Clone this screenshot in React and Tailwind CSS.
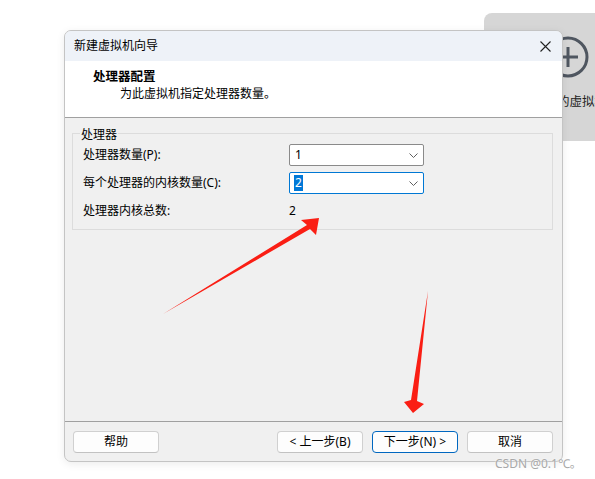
import React from 'react';

const font = { fontFamily: '"Noto Sans", "Noto Sans CJK SC", sans-serif' };

const Chevron = () => (
  <svg width="9" height="5" viewBox="0 0 9 5" className="shrink-0">
    <path d="M0.5 0.5 L4.5 4.5 L8.5 0.5" fill="none" stroke="#606060" strokeWidth="1" />
  </svg>
);

const Combo = ({ value, focused }) => (
  <div
    className={
      'h-[22px] w-[135px] bg-white rounded-[2px] border flex items-center justify-between pl-[4px] pr-[5px] ' +
      (focused ? 'border-[#0078d4]' : 'border-[#8a8a8a]')
    }
  >
    {focused ? (
      <span className="bg-[#0078d7] text-white text-[12px] leading-[16px] px-[1px]">{value}</span>
    ) : (
      <span className="text-[12px] leading-[16px] text-black pl-[1px]">{value}</span>
    )}
    <Chevron />
  </div>
);

const Button = ({ children, primary }) => (
  <button
    className={
      'w-[86px] h-[22px] rounded-[4px] bg-[#fdfdfd] border text-[12px] leading-[16px] text-black flex items-center justify-center ' +
      (primary ? 'border-[#0067c0]' : 'border-[#d0d0d0] border-b-[#c2c2c2]')
    }
  >
    {children}
  </button>
);

export default function App() {
  return (
    <div className="relative w-[595px] h-[479px] bg-white overflow-hidden" style={font}>
      {/* window behind the wizard */}
      <div className="absolute left-[484px] top-[13px] w-[130px] h-[128px] bg-[#d6d6d6] rounded-[8px]">
        <svg className="absolute left-[63px] top-[23px]" width="42" height="42" viewBox="0 0 42 42">
          <circle cx="21" cy="21" r="19" fill="none" stroke="#4f5660" strokeWidth="3" />
          <path d="M21 11 V31 M11 21 H31" stroke="#4f5660" strokeWidth="3" />
        </svg>
        <span className="absolute left-[73px] top-[81px] text-[12.5px] leading-[16px] text-[#222] whitespace-nowrap">
          的虚拟机
        </span>
      </div>

      {/* wizard dialog */}
      <div className="relative z-10 ml-[64px] mt-[30px] w-[499px] h-[432px] border border-[#c4c4c4] rounded-[7px] overflow-hidden flex flex-col bg-[#f0f0f0] shadow-[0_2px_8px_rgba(0,0,0,0.08)]">
        <div className="h-[30px] bg-[#eef2f8] flex items-center justify-between pl-[9px] pr-[11px]">
          <span className="text-[12px] leading-[16px] text-black">新建虚拟机向导</span>
          <svg width="11" height="11" viewBox="0 0 11 11">
            <path d="M0.5 0.5 L10.5 10.5 M10.5 0.5 L0.5 10.5" stroke="#222" strokeWidth="1.1" />
          </svg>
        </div>

        <div className="h-[57px] bg-white border-b border-[#a0a0a0] pt-[8px] pl-[28px]">
          <div className="text-[12.5px] leading-[16px] font-bold text-black">处理器配置</div>
          <div className="mt-[1px] pl-[27px] text-[12px] leading-[16px] text-black">为此虚拟机指定处理器数量。</div>
        </div>

        <div className="flex-1 pt-[15px] pl-[7px] pr-[9px]">
          <div className="relative border border-[#dcdcdc] h-[97px] pt-[10px] pl-[10px]">
            <span className="absolute left-[7px] -top-[7px] bg-[#f0f0f0] px-[1px] text-[12px] leading-[16px] text-black">
              处理器
            </span>
            <div className="grid grid-cols-[206px_135px] gap-y-[6px] text-[12px] leading-[16px] text-black">
              <div className="h-[22px] flex items-center">处理器数量(P):</div>
              <Combo value="1" />
              <div className="h-[22px] flex items-center">每个处理器的内核数量(C):</div>
              <Combo value="2" focused />
              <div className="h-[22px] flex items-center">处理器内核总数:</div>
              <div className="h-[22px] flex items-center">2</div>
            </div>
          </div>
        </div>

        <div className="h-[40px] border-t border-[#a0a0a0] pt-[9px] pl-[8px] pr-[9px] flex">
          <Button>帮助</Button>
          <div className="ml-auto flex gap-[9px]">
            <Button>&lt; 上一步(B)</Button>
            <Button primary>下一步(N) &gt;</Button>
            <Button>取消</Button>
          </div>
        </div>
      </div>

      {/* red annotation arrows */}
      <svg className="absolute inset-0 z-20 pointer-events-none" width="595" height="479" viewBox="0 0 595 479">
        <polygon
          points="163,314 310,229 316,235 319,218 301,220 307,225"
          fill="#fa1e14"
        />
        <polygon
          points="428,291 417,401 424,404 413,413 404,402 411,400"
          fill="#fa1e14"
        />
      </svg>

      <span className="absolute z-20 left-[495px] top-[456px] text-[12px] leading-[16px] text-[#a8a8a8] whitespace-nowrap [text-shadow:0_0_2px_#fff]">
        CSDN @0.1℃。
      </span>
    </div>
  );
}
